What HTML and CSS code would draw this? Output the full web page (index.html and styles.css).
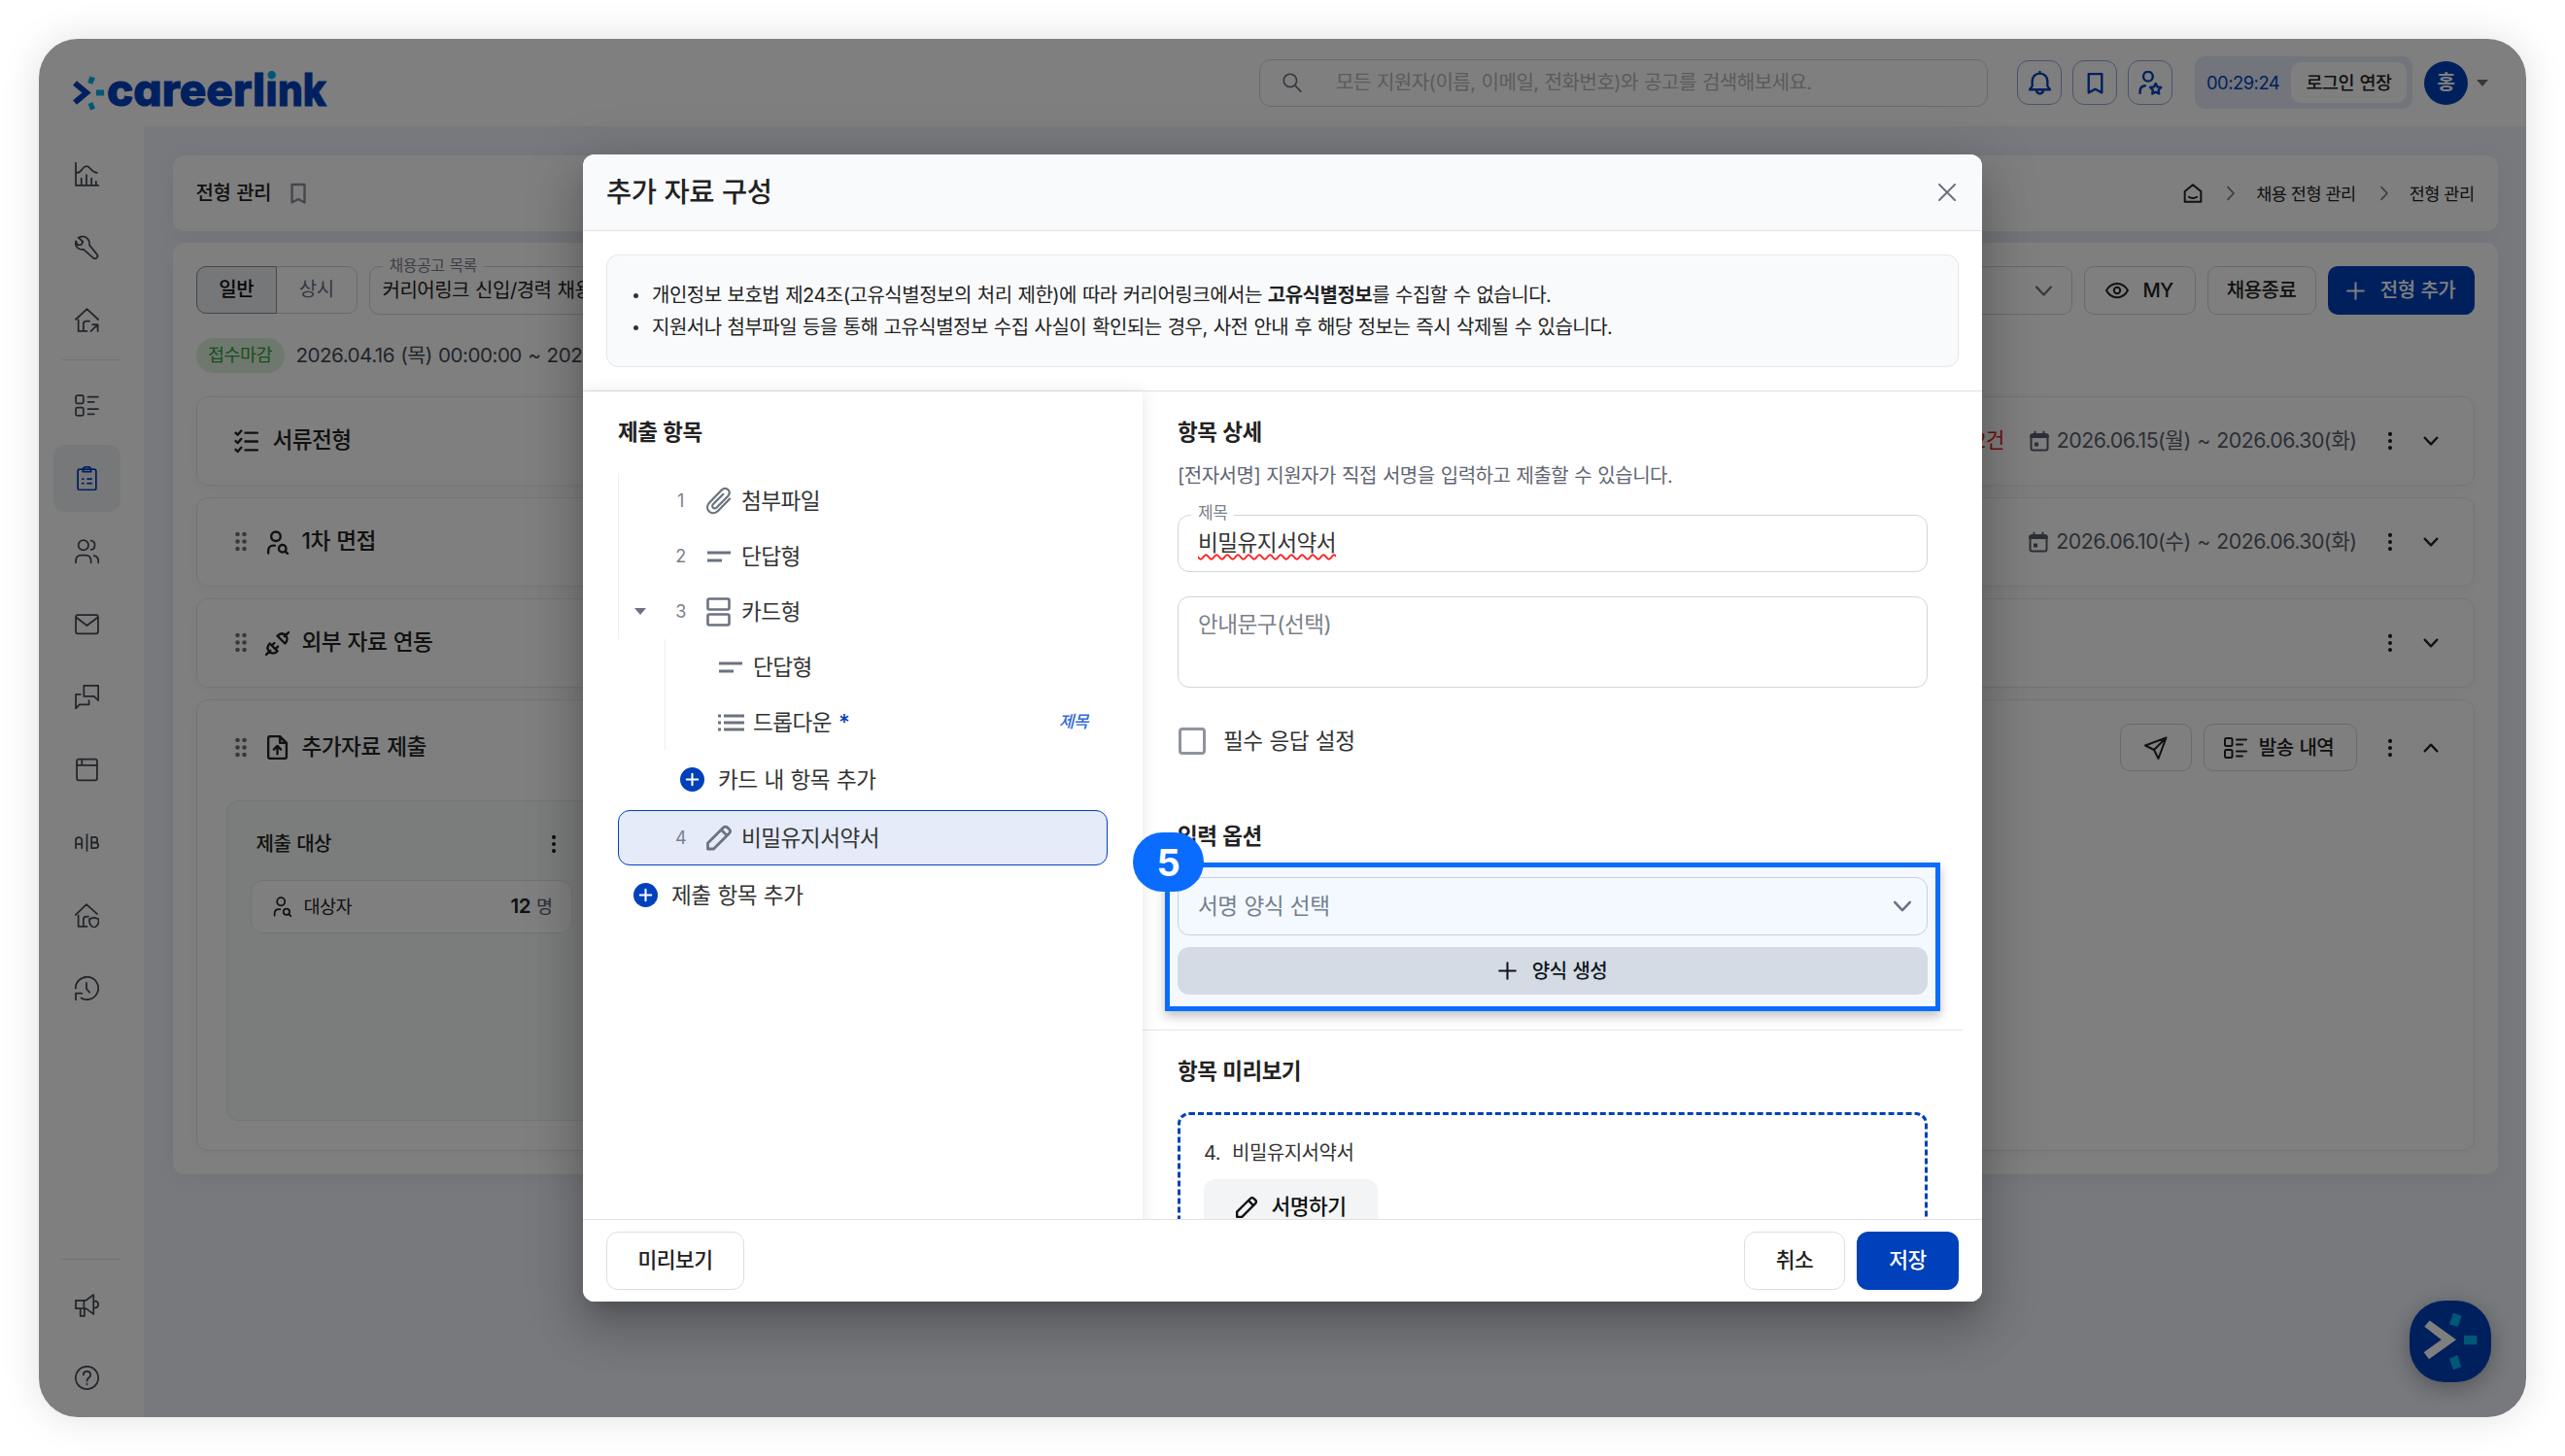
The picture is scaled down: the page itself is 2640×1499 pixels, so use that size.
FILE: index.html
```html
<!DOCTYPE html>
<html lang="ko">
<head>
    <meta charset="UTF-8">
    <meta name="viewport" content="width=device-width, initial-scale=1.0">
    <title>전형 관리 - careerlink</title>
    <link rel="stylesheet" href="styles.css">
</head>
<body>
    <!-- 공용 아이콘 -->
    <svg class="sprite">
        <symbol id="i-bookmark" viewBox="0 0 24 24"><path d="M5.500 3h13v18.500L12 18l-6.500 3.500z"/></symbol>
        <symbol id="i-list" viewBox="0 0 24 24"><rect x="1" y="2" width="7.500" height="8" rx="1.500"/><rect x="1" y="14" width="7.500" height="8" rx="1.500"/><path d="M13 3.500h10M13 8.500h6M13 15.500h10M13 20.500h6"/></symbol>
        <symbol id="i-usersearch" viewBox="0 0 24 24"><circle cx="10.500" cy="6" r="4.600"/><path d="M3 22.500v-2.500c0-3 2-5 5-5h1.500"/><circle cx="17" cy="18" r="3.600"/><path d="M19.800 20.800l2.200 2.200"/></symbol>
        <symbol id="i-more" viewBox="0 0 24 24"><g fill="currentColor" stroke="none"><circle cx="12" cy="3.500" r="2.500"/><circle cx="12" cy="12" r="2.500"/><circle cx="12" cy="20.500" r="2.500"/></g></symbol>
        <symbol id="i-down" viewBox="0 0 24 24"><path d="M3.500 7.500l8.500 9 8.500-9"/></symbol>
        <symbol id="i-up" viewBox="0 0 24 24"><path d="M3.500 16.500l8.500-9 8.500 9"/></symbol>
        <symbol id="i-right" viewBox="0 0 24 24"><path d="M8 3.500l8 8.500-8 8.500"/></symbol>
        <symbol id="i-plus" viewBox="0 0 24 24"><path d="M12 1.500v21M1.500 12h21"/></symbol>
        <symbol id="i-drag" viewBox="0 0 14 22"><g fill="currentColor" stroke="none"><circle cx="3.500" cy="3" r="2.300"/><circle cx="10.500" cy="3" r="2.300"/><circle cx="3.500" cy="10.500" r="2.300"/><circle cx="10.500" cy="10.500" r="2.300"/><circle cx="3.500" cy="18" r="2.300"/><circle cx="10.500" cy="18" r="2.300"/></g></symbol>
        <symbol id="i-calendar" viewBox="0 0 20 22"><rect x="1.500" y="4" width="17" height="16.500" rx="2"/><path d="M5.500 1.500v3M14.500 1.500v3"/><path d="M5 12.500h4v4h-4z" fill="currentColor" stroke="none"/><path d="M2 6h16" stroke-width="4"/></symbol>
        <symbol id="i-pencil" viewBox="0 0 28 28"><path d="M2.500 25.500v-6L18.500 3.500c1.300-1.300 3-1.300 4.300 0l1.700 1.700c1.300 1.300 1.300 3 0 4.300L8.500 25.500zM16.500 6l5.500 5.500"/></symbol>
        <symbol id="i-short" viewBox="0 0 26 14"><path d="M1 3h24M1 11h15"/></symbol>
        <symbol id="i-add" viewBox="0 0 24 24"><circle cx="12" cy="12" r="12" fill="#0041bb" stroke="none"/><path d="M12 6.500v11M6.500 12h11" stroke="#fff"/></symbol>
        <symbol id="i-caret" viewBox="0 0 12 7"><path d="M0 0h12L6 7z" fill="currentColor" stroke="none"/></symbol>
    </svg>

    <div class="frame">
        <header class="top">
            <div class="logo">
                <svg class="logo-mark" viewBox="0 0 32 36">
                    <path d="M2 7.500L14 17.500 2 27.500" fill="none" stroke="#0041bf" stroke-width="6"/>
                    <g fill="#00aeef"><path d="M17.500.5l5.500 1.800-2.800 6.500-5-1.800zM24 14.500h8v6h-8zM15.500 29l5-1.800 2.500 6.500-5 1.800z"/></g>
                </svg>
                <svg class="logo-text" viewBox="0 0 226 60">
                    <defs>
                        <!-- i의 점만 하늘색 -->
                        <linearGradient id="dot" gradientUnits="userSpaceOnUse" x1="0" y1="0" x2="0" y2="60">
                            <stop offset=".32" stop-color="#00aeef"/>
                            <stop offset=".32" stop-color="#0041bf"/>
                        </linearGradient>
                    </defs>
                    <text x="-1" y="46" textLength="163" lengthAdjust="spacingAndGlyphs">careerl</text>
                    <text class="logo-i" x="162.500" y="46" textLength="12" lengthAdjust="spacingAndGlyphs">i</text>
                    <text x="175" y="46" textLength="50" lengthAdjust="spacingAndGlyphs">nk</text>
                </svg>
            </div>
            <div class="search">
                <svg class="ic" viewBox="0 0 24 24"><circle cx="9.500" cy="9.500" r="8"/><path d="M15.500 15.500l7 7.500"/></svg>
                <span>모든 지원자(이름, 이메일, 전화번호)와 공고를 검색해보세요.</span>
            </div>
            <div class="top-buttons">
                <button class="icon-btn"><svg class="ic" viewBox="0 0 24 24"><path d="M2 18.500h20l-2.500-3.500V10c0-4.300-3-7.500-7.500-7.500S4.500 5.700 4.500 10v5zM8.500 19c.4 2.300 1.700 3.500 3.500 3.500s3.100-1.200 3.500-3.500M12 2.500V1"/></svg></button>
                <button class="icon-btn"><svg class="ic"><use href="#i-bookmark"/></svg></button>
                <button class="icon-btn"><svg class="ic" viewBox="0 0 24 24"><circle cx="9.500" cy="5.500" r="4.700"/><path d="M1.500 22v-1.500c0-3.500 2-5.500 5-5.800"/><path d="M17 12.500l1.700 3.200 3.600.6-2.500 2.600.5 3.600-3.300-1.600-3.300 1.600.5-3.600-2.500-2.600 3.600-.6z"/></svg></button>
            </div>
            <div class="timer">
                <span>00:29:24</span>
                <button>로그인 연장</button>
            </div>
            <div class="avatar">홍</div>
            <svg class="ic caret"><use href="#i-caret"/></svg>
        </header>

        <div class="body">
            <nav class="side">
                <a><svg class="ic" viewBox="0 0 24 24"><path d="M1 0v23h22.500M6.500 23v-7M11.500 23V12.500M16.500 23v-7M21 23v-4M2 10.500c5 0 5-6.500 9.500-6.500s4 6 10.500 6.500"/></svg></a>
                <a><svg class="ic" viewBox="0 0 24 24"><path d="M3.500 2.500l4.500 4-1.500 3-3.500.5L1 6c-1.500 5 2.500 9 7.500 8L18 22.500c1 1 2.700 1 3.700 0s1-2.700 0-3.700L14.500 10c.5-5-3-9.500-8-8.500z"/></svg></a>
                <a><svg class="ic" viewBox="0 0 24 24"><path d="M.8 11.500L12 1l11.200 10.500M3.500 12v11H12M8.500 23v-7c0-2 1-3 3-3h3M16 23l6.500-6.500M17.500 16.500h5.200v6.500"/></svg></a>
                <hr>
                <a><svg class="ic"><use href="#i-list"/></svg></a>
                <a class="on"><svg class="ic" viewBox="0 0 24 24"><rect x="3" y="3" width="18" height="20.500" rx="2"/><path d="M8 3.500c0-4 8-4 8 0v2H8zM7.500 12.500h1M7.500 17h1M12.500 12.500h4M12.500 17h4"/></svg></a>
                <a><svg class="ic" viewBox="0 0 24 24"><circle cx="8.500" cy="6" r="5"/><path d="M1 24v-2c0-4 2-6 5.500-6h4c3.500 0 5.500 2 5.500 6v2M16 1.500c5 .5 5 8.500 0 9M19 16.500c3 .5 4.300 2.500 4.300 5.500v2"/></svg></a>
                <a><svg class="ic" viewBox="0 0 24 24"><rect x="1" y="3" width="22" height="18.500" rx="2"/><path d="M1.500 5.500L12 13.500l10.500-8"/></svg></a>
                <a><svg class="ic" viewBox="0 0 24 24"><path d="M9 .8h14.200v14.700L19 11.500H9zM5.500 9.500H1v14l3.500-4H14v-4"/></svg></a>
                <a><svg class="ic" viewBox="0 0 24 24"><rect x="2" y="1.500" width="20" height="21" rx="2"/><path d="M2 7.500h20M7 2v5.500"/></svg></a>
                <a><svg class="ic" viewBox="0 0 24 24"><path d="M12 4v16M1 17.500V9.500c0-3.500 6-3.500 6 0v8M1 13.500h6M16.500 6.500v11h4c3.500 0 3.500-5.500 0-5.500h-4M16.500 6.500h3.500c3 0 3 5.500 0 5.500"/></svg></a>
                <a><svg class="ic" viewBox="0 0 24 24"><path d="M.8 11.500L11.500 1 22 10.500M3.500 12v11H12M8.500 23v-7c0-2 1-3 3-3h2M19 14l4.500 1.500c.5 4-1 7-4.500 8.500-3.500-1.500-5-4.500-4.500-8.500z"/></svg></a>
                <a><svg class="ic" viewBox="0 0 24 24"><path d="M.8 12a11.200 11.200 0 1 1 5.500 9.600M7 17H1v6.500M11.500 6.500v6l3 3.500"/></svg></a>
                <div class="side-bottom">
                    <hr>
                    <a><svg class="ic" viewBox="0 0 24 24"><path d="M1 7.500h10L18.500 2v19L11 15.500H1zM9 7.500v8M5.500 15.500V23h4v-7.500M19 8c5.500 0 5.500 7 0 7"/></svg></a>
                    <a><svg class="ic" viewBox="0 0 24 24"><circle cx="12" cy="12" r="11.200"/><path d="M8.500 9c0-4.500 7-4.500 7 0 0 3-3.500 3-3.500 6M12 18v.5"/></svg></a>
                </div>
            </nav>

            <main class="main">
                <section class="panel crumb">
                    <span class="crumb-title">전형 관리</span>
                    <svg class="ic crumb-mark"><use href="#i-bookmark"/></svg>
                    <div class="path">
                        <svg class="ic home" viewBox="0 0 24 24"><path d="M2 9.500L12 1.500l10 8V22.500H2zM7 16.500c2.500 2 7.500 2 10 0"/></svg>
                        <svg class="ic sep"><use href="#i-right"/></svg>
                        <span>채용 전형 관리</span>
                        <svg class="ic sep"><use href="#i-right"/></svg>
                        <span>전형 관리</span>
                    </div>
                </section>

                <section class="panel board">
                    <div class="tools">
                        <div class="toggle"><span class="active">일반</span><span>상시</span></div>
                        <div class="post">
                            <span class="legend">채용공고 목록</span>
                            <span>커리어링크 신입/경력 채용</span>
                            <svg class="ic"><use href="#i-down"/></svg>
                        </div>
                        <button class="btn my"><svg class="ic" viewBox="0 0 24 24"><path d="M1 12C6 2.500 18 2.500 23 12 18 21.500 6 21.500 1 12z"/><circle cx="12" cy="12" r="3.200"/></svg>MY</button>
                        <button class="btn end">채용종료</button>
                        <button class="btn new"><svg class="ic"><use href="#i-plus"/></svg>전형 추가</button>
                    </div>
                    <div class="period"><span class="status">접수마감</span>2026.04.16 (목) 00:00:00 ~ 2026.05.31</div>

                    <div class="step first">
                        <svg class="ic step-ic" viewBox="0 0 24 24"><path d="M1.500 3.500l2 2L7 1.500M1.500 11.500l2 2L7 9.500M1.500 20l2 2L7 18M11 3.500h12M11 12h12M11 20.500h12"/></svg>
                        <b>서류전형</b>
                        <div class="step-right">
                            <em>2건</em>
                            <svg class="ic cal"><use href="#i-calendar"/></svg>
                            <span class="date">2026.06.15(월) ~ 2026.06.30(화)</span>
                            <svg class="ic more"><use href="#i-more"/></svg>
                            <svg class="ic arrow"><use href="#i-down"/></svg>
                        </div>
                    </div>
                    <div class="step">
                        <svg class="ic drag"><use href="#i-drag"/></svg>
                        <svg class="ic step-ic"><use href="#i-usersearch"/></svg>
                        <b>1차 면접</b>
                        <div class="step-right">
                            <svg class="ic cal"><use href="#i-calendar"/></svg>
                            <span class="date">2026.06.10(수) ~ 2026.06.30(화)</span>
                            <svg class="ic more"><use href="#i-more"/></svg>
                            <svg class="ic arrow"><use href="#i-down"/></svg>
                        </div>
                    </div>
                    <div class="step">
                        <svg class="ic drag"><use href="#i-drag"/></svg>
                        <svg class="ic step-ic" viewBox="0 0 24 24"><path d="M1 23l4-4M4.500 12l7.500 7.500c-3 3-6 2.500-8 .5s-2.500-5 .5-8zM6.500 14l2.500-2.500M10 17.500l2.500-2.500M23 1l-4 4M12 4.500l7.500 7.500c3-3 2.500-6 .5-8s-5-2.500-8 .5z"/></svg>
                        <b>외부 자료 연동</b>
                        <div class="step-right">
                            <svg class="ic more"><use href="#i-more"/></svg>
                            <svg class="ic arrow"><use href="#i-down"/></svg>
                        </div>
                    </div>
                    <div class="step open">
                        <div class="step-head">
                            <svg class="ic drag"><use href="#i-drag"/></svg>
                            <svg class="ic step-ic" viewBox="0 0 24 24"><path d="M14.500 1H5c-1.200 0-2 .8-2 2v18c0 1.200.8 2 2 2h14c1.200 0 2-.8 2-2V7.500zM14.500 1v6.500H21M12 18.500v-7M8.500 14l3.500-3.500 3.500 3.500"/></svg>
                            <b>추가자료 제출</b>
                            <div class="step-right">
                                <button class="btn send"><svg class="ic" viewBox="0 0 24 24"><path d="M22.500 1.500L1 9.500l9 4.500 4.500 9zM22.500 1.500L10 14"/></svg></button>
                                <button class="btn log"><svg class="ic"><use href="#i-list"/></svg>발송 내역</button>
                                <svg class="ic more"><use href="#i-more"/></svg>
                                <svg class="ic arrow"><use href="#i-up"/></svg>
                            </div>
                        </div>
                        <div class="target">
                            <div class="target-head">제출 대상<svg class="ic more"><use href="#i-more"/></svg></div>
                            <div class="target-row">
                                <svg class="ic"><use href="#i-usersearch"/></svg>
                                <span>대상자</span>
                                <b>12</b><i>명</i>
                            </div>
                        </div>
                    </div>
                </section>
            </main>
        </div>

        <div class="talk">
            <svg viewBox="0 0 84 84">
                <path d="M15.300 26.700l5.400-6.300L48 40.300 20 60.300l-5.300-7L32.700 40.300z" fill="#fff"/>
                <g fill="#00aeef"><path d="M45 12.700l8.700 3-4 11.300-8.700-2.700zM56 36h13.300v9.300H56zM41 59.700l8.300-3.700L53.300 68.300l-8.300 3z"/></g>
            </svg>
        </div>

        <div class="backdrop">
            <div class="modal">
                <div class="modal-head">
                    <h2>추가 자료 구성</h2>
                    <svg class="ic" viewBox="0 0 18 18"><path d="M1 1l16 16M17 1L1 17"/></svg>
                </div>
                <div class="notice-wrap">
                    <ul class="notice">
                        <li>개인정보 보호법 제24조(고유식별정보의 처리 제한)에 따라 커리어링크에서는 <b>고유식별정보</b>를 수집할 수 없습니다.</li>
                        <li>지원서나 첨부파일 등을 통해 고유식별정보 수집 사실이 확인되는 경우, 사전 안내 후 해당 정보는 즉시 삭제될 수 있습니다.</li>
                    </ul>
                </div>
                <div class="split">
                    <div class="left">
                        <h3>제출 항목</h3>
                        <div class="row line"><span class="fold"></span><span class="num">1</span>
                            <span class="slot"><svg class="ic clip" viewBox="0 0 28 30"><path d="M25.500 13L13 25.800c-3 3-7 3-9.500.5s-2.500-6.500.5-9.500L17 3.500c2-2 5-2 6.800-.2s1.800 4.700-.2 6.700L11.500 22.300c-1.200 1.200-2.800 1.200-3.800.2s-1-2.600.2-3.800L18.500 8"/></svg></span>
                            <span class="name">첨부파일</span></div>
                        <div class="row line"><span class="fold"></span><span class="num">2</span>
                            <span class="slot"><svg class="ic short"><use href="#i-short"/></svg></span>
                            <span class="name">단답형</span></div>
                        <div class="row line"><span class="fold"><svg class="ic caret"><use href="#i-caret"/></svg></span><span class="num">3</span>
                            <span class="slot"><svg class="ic cards" viewBox="0 0 26 30"><rect x="1.500" y="1.500" width="22" height="11" rx="1.500"/><rect x="1.500" y="17.500" width="22" height="11" rx="1.500"/></svg></span>
                            <span class="name">카드형</span></div>
                        <div class="row sub">
                            <span class="slot"><svg class="ic short"><use href="#i-short"/></svg></span>
                            <span class="name">단답형</span></div>
                        <div class="row sub">
                            <span class="slot"><svg class="ic drop" viewBox="0 0 28 18"><path d="M1 2h3M7 2h21M1 9h3M7 9h21M1 16h3M7 16h21"/></svg></span>
                            <span class="name">드롭다운 <strong>*</strong></span><span class="tag">제목</span></div>
                        <div class="row add inner"><svg class="ic"><use href="#i-add"/></svg>카드 내 항목 추가</div>
                        <div class="row picked"><span class="fold"></span><span class="num">4</span>
                            <span class="slot"><svg class="ic pencil"><use href="#i-pencil"/></svg></span>
                            <span class="name">비밀유지서약서</span></div>
                        <div class="row add"><svg class="ic"><use href="#i-add"/></svg>제출 항목 추가</div>
                    </div>
                    <div class="right">
                        <h3>항목 상세</h3>
                        <p class="desc">[전자서명] 지원자가 직접 서명을 입력하고 제출할 수 있습니다.</p>
                        <div class="field"><span class="legend">제목</span><span class="typo">비밀유지서약서</span></div>
                        <div class="field area">안내문구(선택)</div>
                        <div class="check"><i></i>필수 응답 설정</div>
                        <h4>입력 옵션</h4>
                        <div class="option">
                            <div class="select">서명 양식 선택<svg class="ic"><use href="#i-down"/></svg></div>
                            <button class="make"><svg class="ic"><use href="#i-plus"/></svg>양식 생성</button>
                            <div class="mark"></div>
                            <div class="mark-no">5</div>
                        </div>
                        <hr>
                        <h4 class="preview-title">항목 미리보기</h4>
                        <div class="preview">
                            <p><span>4.</span>비밀유지서약서</p>
                            <button><svg class="ic"><use href="#i-pencil"/></svg>서명하기</button>
                        </div>
                    </div>
                </div>
                <div class="modal-foot">
                    <button class="look">미리보기</button>
                    <button class="cancel">취소</button>
                    <button class="save">저장</button>
                </div>
            </div>
        </div>
    </div>
</body>
</html>
```

FILE: styles.css
```css
* {
    padding: 0;
    margin: 0;
    box-sizing: border-box;
}
body {
    padding: 40px;
    background: #fff;
    color: #222;
    font-family: Inter, "Noto Sans CJK KR", sans-serif;
    font-size: 20px;
    line-height: 1.2;
    letter-spacing: -.025em;
    word-spacing: .05em;
    white-space: nowrap;
    overflow: hidden;
}
button {
    font: inherit;
    letter-spacing: inherit;
    word-spacing: inherit;
    color: inherit;
    background: none;
    border: none;
    white-space: nowrap;
}
hr {
    border: none;
    height: 1px;
    background: #e5e7eb;
}
.sprite {
    display: none;
}
.ic {
    flex: none;
    display: block;
    width: 24px;
    height: 24px;
    fill: none;
    stroke: currentColor;
    stroke-width: 2;
    stroke-linecap: round;
    stroke-linejoin: round;
}
.frame {
    position: relative;
    width: 2560px;
    height: 1419px;
    border-radius: 40px;
    overflow: hidden;
    background: #f0f3fb;
}
body::before {
    content: "";
    position: absolute;
    left: 40px;
    top: 40px;
    width: 2560px;
    height: 1419px;
    border-radius: 40px;
    box-shadow: 0 0 40px rgba(0, 0, 0, .12);
}

/* 상단 */
.top {
    display: flex;
    align-items: center;
    height: 90px;
    padding: 0 39px 0 35px;
    background: #fff;
}
.logo {
    display: flex;
    align-items: center;
    margin-right: auto;
    padding-top: 22px;
}
.logo-mark {
    width: 32px;
    height: 36px;
}
.logo-text {
    width: 226px;
    height: 60px;
    margin: -7px 0 0 4px;
    font-size: 46px;
    font-weight: 800;
    letter-spacing: 0;
    font-feature-settings: "cv11";
    overflow: visible;
}
.logo-text text {
    fill: #0041bf;
    stroke: #0041bf;
    stroke-width: 1px;
}
.logo-text .logo-i {
    fill: url(#dot);
    stroke: url(#dot);
}
.search {
    display: flex;
    align-items: center;
    width: 750px;
    height: 49px;
    padding-left: 23px;
    border: 1px solid #d2d4d8;
    border-radius: 12px;
    color: #b4b6bb;
}
.search .ic {
    width: 20px;
    height: 20px;
    margin-right: 35px;
    color: #6b7280;
}
.top-buttons {
    display: flex;
    gap: 11px;
    margin: 0 23px 0 30px;
}
.icon-btn {
    display: flex;
    align-items: center;
    justify-content: center;
    width: 46px;
    height: 46px;
    border: 1px solid #8fa9de;
    border-radius: 12px;
    color: #0041bb;
}
.icon-btn .ic {
    width: 25px;
    height: 25px;
    stroke-width: 2.300;
}
.timer {
    display: flex;
    align-items: center;
    justify-content: space-between;
    width: 224px;
    height: 54px;
    padding: 0 6px 0 12px;
    border-radius: 10px;
    background: #e5ebf8;
    color: #0041bb;
    font-size: 18.400px;
}
.timer button {
    width: 119px;
    height: 42px;
    border-radius: 10px;
    background: #fff;
    color: #222;
    font-size: 18.500px;
    font-weight: 500;
}
.avatar {
    width: 45px;
    height: 45px;
    margin: 0 9px 0 12px;
    border-radius: 50%;
    background: #0041bb;
    color: #fff;
    font-weight: 600;
    line-height: 45px;
    text-align: center;
}
.caret {
    width: 12px;
    height: 7px;
    color: #6b7280;
}

/* 좌측 메뉴 */
.body {
    display: flex;
    height: 1329px;
}
.side {
    display: flex;
    flex-direction: column;
    gap: 6px;
    width: 108px;
    padding: 15px 24px 6px 15px;
    background: #fff;
    color: #444b57;
}
.side a {
    display: flex;
    align-items: center;
    justify-content: center;
    height: 69px;
    border-radius: 12px;
}
.side .ic {
    width: 25px;
    height: 25px;
    stroke-width: 1.700;
}
.side .on {
    background: #eff0f2;
    color: #0041bb;
}
.side hr {
    width: 61px;
    margin: 0 0 6px 8px;
}
.side-bottom {
    display: flex;
    flex-direction: column;
    gap: 6px;
    margin-top: auto;
}

/* 본문 */
.main {
    flex: 1;
    padding: 30px 29.500px 0;
}
.panel {
    border-radius: 12px;
    background: #fff;
    box-shadow: 0 4px 24px rgba(80, 90, 130, .08);
}
.crumb {
    display: flex;
    align-items: center;
    height: 78px;
    padding: 0 24px;
    font-weight: 500;
}
.crumb-mark {
    margin-left: 16px;
    color: #8b8f99;
    stroke-width: 2.400;
}
.path {
    display: flex;
    align-items: center;
    margin-left: auto;
    font-size: 17.500px;
    font-weight: 400;
    word-spacing: 0;
}
.home {
    width: 20px;
    height: 20px;
    stroke-width: 2.400;
}
.sep {
    width: 18px;
    height: 18px;
    margin: 0 17px 0 20px;
    color: #6b7280;
}
.board {
    height: 959px;
    margin-top: 12px;
    padding: 24px;
}
.tools {
    display: flex;
    gap: 12px;
    height: 50px;
}
.toggle {
    display: flex;
    width: 166px;
    height: 49px;
    border: 1px solid #d2d4d8;
    border-radius: 10px;
}
.toggle span {
    flex: 1;
    line-height: 47px;
    text-align: center;
    color: #6b7280;
}
.toggle .active {
    margin: -1px 0;
    margin-left: -1px;
    border: 1px solid #8b8f99;
    border-radius: 10px 0 0 10px;
    background: #eceef2;
    color: #111;
    font-weight: 500;
}
.post {
    position: relative;
    flex: 1;
    display: flex;
    align-items: center;
    justify-content: space-between;
    padding: 0 18px 0 13px;
    border: 1px solid #d2d4d8;
    border-radius: 10px;
}
.post .ic {
    width: 21px;
    height: 21px;
    color: #6b7280;
    stroke-width: 2.600;
}
.legend {
    position: absolute;
    left: 13px;
    top: -11px;
    padding: 0 7px;
    background: #fff;
    color: #7b808b;
    font-size: 16px;
}
.btn {
    display: flex;
    align-items: center;
    justify-content: center;
    height: 50px;
    border: 1px solid #d2d4d8;
    border-radius: 10px;
    font-weight: 500;
}
.my {
    gap: 14px;
    width: 115px;
}
.end {
    width: 112px;
}
.new {
    gap: 16px;
    width: 151px;
    border: none;
    background: #0041bb;
    color: #fff;
}
.new .ic {
    width: 19px;
    height: 19px;
    stroke-width: 2.600;
}
.period {
    display: flex;
    align-items: center;
    height: 36px;
    margin: 24px 0;
    color: #444b57;
    font-size: 20.600px;
}
.status {
    width: 91px;
    height: 36px;
    margin-right: 12px;
    border-radius: 18px;
    background: #dff0df;
    color: #2f9e35;
    font-size: 18.500px;
    line-height: 35px;
    text-align: center;
}
.step {
    display: flex;
    align-items: center;
    height: 92px;
    margin-bottom: 12px;
    padding: 0 35px 0 38px;
    border: 1px solid #e8e9ec;
    border-radius: 12px;
    box-shadow: 0 4px 16px rgba(0, 0, 0, .04);
}
.step b {
    font-weight: 500;
}
.step > b, .step-head b {
    padding-bottom: 2px;
    font-size: 22.600px;
}
.drag {
    width: 14px;
    height: 22px;
    margin-right: 18px;
    color: #6b7280;
}
.step-ic {
    width: 25px;
    height: 25px;
    margin-right: 13px;
    stroke-width: 2.300;
}
.first .step-ic {
    margin-right: 15px;
}
.step-right {
    display: flex;
    align-items: center;
    margin-left: auto;
    color: #59606d;
    font-size: 21.300px;
}
.step-right em {
    margin-right: 26px;
    color: #e01b1b;
    font-style: normal;
}
.cal {
    width: 20px;
    height: 22px;
    margin-right: 8px;
}
.more {
    width: 20px;
    height: 20px;
    margin-left: 24px;
    color: #222;
}
.arrow {
    width: 18px;
    height: 18px;
    margin-left: 23px;
    color: #222;
    stroke-width: 3;
}
.step.open {
    display: block;
    height: 465px;
    margin: 0;
    padding: 0 0 0 30px;
}
.step-head {
    display: flex;
    align-items: center;
    height: 97px;
    padding: 0 35px 0 8px;
}
.send, .log {
    height: 49px;
    color: #222;
}
.send {
    width: 74px;
    margin-right: 12px;
}
.log {
    gap: 12px;
    width: 158px;
    padding-right: 2px;
    font-size: 20px;
}
.target {
    width: 381px;
    height: 330px;
    margin-top: 6px;
    padding: 12px 24px;
    border: 1px solid #e6e9e8;
    border-radius: 12px;
    background: #f6faf8;
}
.target-head {
    display: flex;
    align-items: center;
    justify-content: space-between;
    height: 64px;
    padding: 0 9px 0 6px;
    font-weight: 500;
}
.target-row {
    display: flex;
    align-items: center;
    width: 331px;
    height: 55px;
    margin-top: 5px;
    padding: 0 19px 0 21px;
    border: 1px solid #e6e9e8;
    border-radius: 12px;
    background: #fff;
    font-size: 18.500px;
}
.target-row .ic {
    width: 21px;
    height: 21px;
    margin-right: 12px;
}
.target-row b {
    margin: 0 6px 0 auto;
    font-size: 20.500px;
    font-weight: 600;
}
.target-row i {
    font-style: normal;
    color: #59606d;
}
.talk {
    position: absolute;
    right: 36px;
    bottom: 36px;
    width: 84px;
    height: 84px;
    border-radius: 36px;
    background: #0041bb;
    box-shadow: 0 6px 24px rgba(0, 0, 0, .3);
}

/* 모달 */
.backdrop {
    position: absolute;
    inset: 0;
    display: flex;
    align-items: center;
    justify-content: center;
    background: rgba(0, 0, 0, .5);
}
.modal {
    display: flex;
    flex-direction: column;
    width: 1440px;
    height: 1181px;
    border-radius: 12px;
    overflow: hidden;
    background: #fff;
    box-shadow: 0 14px 19px -9px rgba(0, 0, 0, .2), 0 30px 48px 4px rgba(0, 0, 0, .14), 0 11px 58px 10px rgba(0, 0, 0, .12);
}
.modal-head {
    display: flex;
    align-items: center;
    justify-content: space-between;
    height: 79px;
    padding: 0 27px 0 24px;
    border-bottom: 1px solid #e2e4e8;
    background: #f9fafc;
}
.modal-head h2 {
    font-size: 28.500px;
    font-weight: 500;
}
.modal-head .ic {
    width: 18px;
    height: 18px;
    color: #6b7280;
}
.notice-wrap {
    height: 165px;
    padding: 24px;
    border-bottom: 1px solid #dfe1e6;
}
.notice {
    height: 116px;
    padding: 25px 0 0 27px;
    border: 1px solid #e4e6ea;
    border-radius: 12px;
    background: #f9fafc;
    list-style: none;
    line-height: 33px;
    word-spacing: .04em;
}
.notice li {
    display: flex;
    align-items: center;
    white-space: pre;
}
.notice li::before {
    content: "";
    width: 5px;
    height: 5px;
    margin: 0 14px 0 0;
    border-radius: 50%;
    background: #333;
}
.notice b {
    font-weight: 700;
}
.split {
    flex: 1;
    display: flex;
    min-height: 0;
    clip-path: inset(-20px 0 0 0);
}
.left {
    position: relative;
    z-index: 1;
    width: 576px;
    height: 900px;
    padding: 0 36px;
    background: #fff;
    box-shadow: 0 0 16px rgba(0, 0, 0, .1);
    color: #333;
    font-size: 22.600px;
}
h3, h4 {
    color: #222;
    font-size: 22.500px;
    font-weight: 700;
}
.left h3 {
    height: 84px;
    line-height: 84px;
}
.row {
    display: flex;
    align-items: center;
    height: 57px;
}
.line {
    border-left: 1px solid #eee;
}
.fold {
    display: flex;
    justify-content: center;
    width: 43px;
}
.num {
    width: 41px;
    color: #7b808b;
    font-size: 18px;
    text-align: center;
}
.slot {
    display: flex;
    justify-content: center;
    width: 37px;
    margin-right: 5px;
    color: #6b7280;
}
.clip, .pencil {
    width: 28px;
    height: 29px;
}
.clip {
    stroke-width: 2.300;
}
.pencil {
    stroke-width: 2.800;
}
.short {
    width: 26px;
    height: 14px;
    stroke-width: 3;
    stroke-linecap: butt;
}
.cards {
    width: 26px;
    height: 30px;
    stroke-width: 2.600;
}
.drop {
    width: 28px;
    height: 18px;
    stroke-width: 3;
    stroke-linecap: butt;
}
.sub {
    margin-left: 48px;
    padding-left: 48px;
    border-left: 1px solid #eee;
}
.sub strong {
    color: #0041bb;
    font-weight: 500;
}
.tag {
    margin: 0 20px 0 auto;
    color: #2f68d8;
    font-size: 17px;
    font-style: italic;
    font-weight: 500;
}
.add {
    gap: 14px;
    height: 62px;
    padding: 0 0 1px 16px;
}
.add .ic {
    width: 25px;
    height: 25px;
}
.inner {
    padding-left: 64px;
}
.picked {
    border: 1px solid #0041bb;
    border-radius: 12px;
    background: #e5ebf8;
}
.right {
    width: 808px;
    padding-left: 36px;
    color: #333;
    font-size: 22.600px;
}
.right h3 {
    height: 72px;
    padding-top: 12px;
    line-height: 60px;
}
.desc {
    height: 30px;
    color: #5f6673;
    font-size: 20px;
    line-height: 30px;
}
.field {
    position: relative;
    height: 59px;
    margin-top: 25px;
    padding-left: 20px;
    border: 1px solid #d2d4dc;
    border-radius: 12px;
    line-height: 56px;
}
.field .legend {
    left: 13px;
    top: -13px;
    font-size: 17px;
    line-height: 20px;
}
.typo {
    text-decoration: underline wavy #f22 1.500px;
    text-underline-offset: 3px;
    text-decoration-skip-ink: none;
}
.area {
    height: 94px;
    color: #7b808b;
}
.check {
    display: flex;
    align-items: center;
    gap: 18px;
    height: 28px;
    margin: 41px 0 0 1px;
}
.check i {
    width: 28px;
    height: 28px;
    border: 3px solid #8f949e;
    border-radius: 4px;
}
h4 {
    height: 30px;
    margin-top: 69px;
    line-height: 30px;
}
.option {
    position: relative;
    margin-top: 27px;
}
.select {
    display: flex;
    align-items: center;
    justify-content: space-between;
    height: 60px;
    padding: 0 14px 0 20px;
    border: 1px solid #d2d4dc;
    border-radius: 12px;
    color: #7b808b;
}
.select .ic {
    width: 22px;
    height: 22px;
    color: #6b7280;
    stroke-width: 2.800;
}
.make {
    display: flex;
    align-items: center;
    justify-content: center;
    gap: 16px;
    width: 100%;
    height: 49px;
    margin-top: 12px;
    border-radius: 12px;
    background: #dee0e4;
    color: #111;
    font-size: 20px;
    font-weight: 500;
}
.make .ic {
    width: 19px;
    height: 19px;
    stroke-width: 2.600;
}
.mark {
    position: absolute;
    inset: -15px -13px -17px;
    border: 5px solid #0a6cff;
    background: rgba(10, 108, 255, .045);
    box-shadow: 0 5px 10px rgba(0, 0, 0, .25);
}
.mark-no {
    position: absolute;
    z-index: 2;
    left: -46px;
    top: -46px;
    width: 73px;
    height: 61px;
    border-radius: 31px;
    background: #0a6cff;
    color: #fff;
    font-size: 38px;
    font-weight: 700;
    line-height: 62px;
    text-align: center;
}
.right hr {
    width: 844px;
    margin: 36px 0 0 -36px;
}
.right .preview-title {
    margin-top: 27px;
}
.preview {
    height: 200px;
    margin-top: 27px;
    padding: 24px 24px;
    border: 3px dashed #0041bb;
    border-radius: 12px;
}
.preview p {
    height: 30px;
    font-size: 20px;
    line-height: 30px;
}
.preview p span {
    display: inline-block;
    width: 29px;
}
.preview button {
    display: flex;
    align-items: center;
    justify-content: center;
    gap: 13px;
    width: 179px;
    height: 57px;
    margin-top: 12px;
    border-radius: 12px;
    background: #f3f4f6;
    color: #111;
    font-size: 21.500px;
    font-weight: 500;
}
.preview .ic {
    stroke-width: 2.800;
}
.modal-foot {
    position: relative;
    display: flex;
    gap: 12px;
    height: 85px;
    padding: 12px 24px;
    border-top: 1px solid #dfe1e6;
    background: #fff;
}
.modal-foot button {
    height: 60px;
    border: 1px solid #dcdee3;
    border-radius: 12px;
    color: #222;
    font-size: 21.500px;
    font-weight: 500;
}
.look {
    width: 142px;
    margin-right: auto;
}
.cancel {
    width: 104px;
}
.modal-foot .save {
    width: 105px;
    border: none;
    background: #0041bb;
    color: #fff;
}
```
